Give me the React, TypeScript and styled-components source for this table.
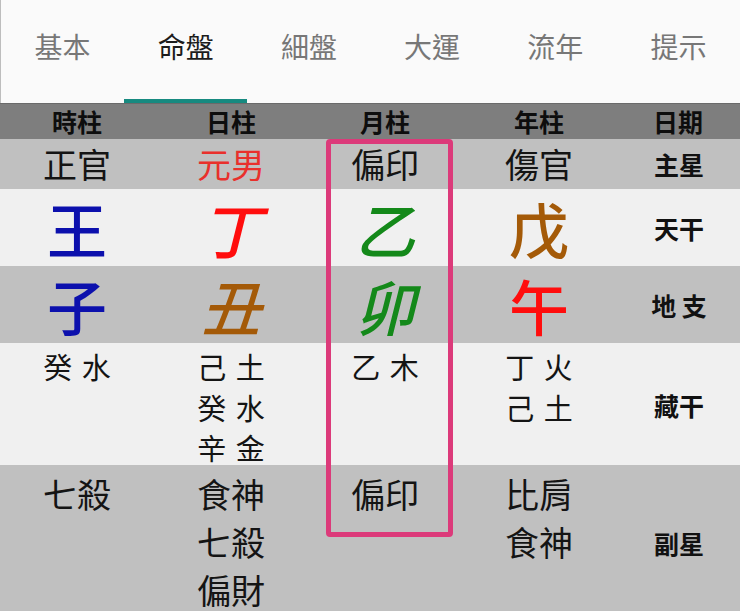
import React from "react";
import styled, { createGlobalStyle } from "styled-components";

const GlobalStyle = createGlobalStyle`
  html, body {
    margin: 0;
    padding: 0;
    background: #c0c0c0;
  }
  body {
    font-family: "Noto Sans CJK TC", "Noto Sans", sans-serif;
  }
  * { box-sizing: border-box; }
`;

const COLS = "154px 154px 154px 154px 1fr";

const Page = styled.div`
  width: 740px;
  display: flex;
  flex-direction: column;
`;

const TabBar = styled.nav`
  display: flex;
  height: 103px;
  background: #fafafa;
  border-left: 1px solid #bdbdbd;
`;

const Tab = styled.div<{ $active?: boolean }>`
  flex: 1;
  display: flex;
  align-items: center;
  justify-content: center;
  padding-bottom: 8px;
  font-size: 28px;
  color: ${(p) => (p.$active ? "#1c1c1c" : "#777777")};
  border-bottom: 4px solid ${(p) => (p.$active ? "#178a80" : "transparent")};
`;

const Table = styled.div`
  position: relative;
  display: flex;
  flex-direction: column;
`;

const HeaderRow = styled.div`
  display: grid;
  grid-template-columns: ${COLS};
  height: 36px;
  background: #7e7e7e;
  box-shadow: inset 0 1px 0 #6a6a6a;
`;

const HeaderCell = styled.div`
  display: flex;
  align-items: center;
  justify-content: center;
  font-size: 25px;
  font-weight: 700;
  color: #0d0d0d;
`;

const Row = styled.div<{ $bg: string; $h: number }>`
  display: grid;
  grid-template-columns: ${COLS};
  background: ${(p) => p.$bg};
  height: ${(p) => p.$h}px;
`;

const Cell = styled.div<{ $top?: boolean; $pad?: number }>`
  display: flex;
  flex-direction: column;
  align-items: center;
  justify-content: ${(p) => (p.$top ? "flex-start" : "center")};
  padding-top: ${(p) => p.$pad ?? 0}px;
`;

const SideLabel = styled.div`
  font-size: 25px;
  font-weight: 700;
  color: #111111;
  white-space: pre;
  margin-left: 2px;
`;

const Star = styled.div<{ $color?: string }>`
  font-size: 34px;
  line-height: 48px;
  color: ${(p) => p.$color ?? "#141414"};
`;

const Gan = styled.div<{ $color: string; $italic?: boolean }>`
  font-size: 60px;
  font-weight: 500;
  line-height: 64px;
  color: ${(p) => p.$color};
  font-style: ${(p) => (p.$italic ? "italic" : "normal")};
`;

const Hidden = styled.div`
  font-size: 29px;
  line-height: 40.5px;
  color: #141414;
  word-spacing: 3px;
  white-space: pre;
`;

const Highlight = styled.div`
  position: absolute;
  left: 326px;
  top: 36px;
  width: 127px;
  height: 398px;
  border: 5px solid #dc3a7a;
  border-radius: 4px;
  pointer-events: none;
`;

const tabs = ["基本", "命盤", "細盤", "大運", "流年", "提示"];
const headers = ["時柱", "日柱", "月柱", "年柱", "日期"];

const BLUE = "#0c10ad";
const RED = "#ff0d0d";
const BROWN = "#a45a08";
const GREEN = "#14891a";

const mainStars: { text: string; color?: string }[] = [
  { text: "正官" },
  { text: "元男", color: "#e9302c" },
  { text: "偏印" },
  { text: "傷官" },
];

const stems = [
  { ch: "王", color: BLUE },
  { ch: "丁", color: RED, italic: true },
  { ch: "乙", color: GREEN, italic: true },
  { ch: "戊", color: BROWN },
];

const branches = [
  { ch: "子", color: BLUE },
  { ch: "丑", color: BROWN, italic: true },
  { ch: "卯", color: GREEN, italic: true },
  { ch: "午", color: RED },
];

const hiddenStems = [["癸 水"], ["己 土", "癸 水", "辛 金"], ["乙 木"], ["丁 火", "己 土"]];
const subStars = [["七殺"], ["食神", "七殺", "偏財"], ["偏印"], ["比肩", "食神"]];

export default function App() {
  return (
    <Page>
      <GlobalStyle />
      <TabBar>
        {tabs.map((t) => (
          <Tab key={t} $active={t === "命盤"}>
            {t}
          </Tab>
        ))}
      </TabBar>
      <Table>
        <HeaderRow>
          {headers.map((h) => (
            <HeaderCell key={h}>{h}</HeaderCell>
          ))}
        </HeaderRow>

        <Row $bg="#c0c0c0" $h={50}>
          {mainStars.map((s, i) => (
            <Cell key={i}>
              <Star $color={s.color}>{s.text}</Star>
            </Cell>
          ))}
          <Cell>
            <SideLabel>主星</SideLabel>
          </Cell>
        </Row>

        <Row $bg="#f0f0f0" $h={77}>
          {stems.map((s, i) => (
            <Cell key={i}>
              <Gan $color={s.color} $italic={s.italic}>
                {s.ch}
              </Gan>
            </Cell>
          ))}
          <Cell>
            <SideLabel>天干</SideLabel>
          </Cell>
        </Row>

        <Row $bg="#c0c0c0" $h={77}>
          {branches.map((s, i) => (
            <Cell key={i}>
              <Gan $color={s.color} $italic={s.italic}>
                {s.ch}
              </Gan>
            </Cell>
          ))}
          <Cell>
            <SideLabel>地 支</SideLabel>
          </Cell>
        </Row>

        <Row $bg="#f0f0f0" $h={122}>
          {hiddenStems.map((lines, i) => (
            <Cell key={i} $top $pad={3}>
              {lines.map((l, j) => (
                <Hidden key={j}>{l}</Hidden>
              ))}
            </Cell>
          ))}
          <Cell>
            <SideLabel>藏干</SideLabel>
          </Cell>
        </Row>

        <Row $bg="#c0c0c0" $h={156}>
          {subStars.map((lines, i) => (
            <Cell key={i} $top $pad={5}>
              {lines.map((l, j) => (
                <Star key={j}>{l}</Star>
              ))}
            </Cell>
          ))}
          <Cell>
            <SideLabel>副星</SideLabel>
          </Cell>
        </Row>

        <Highlight />
      </Table>
    </Page>
  );
}
